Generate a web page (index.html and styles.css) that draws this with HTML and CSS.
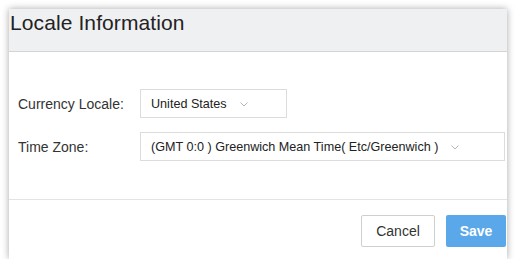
FILE: index.html
```html
<!DOCTYPE html>
<html>
<head>
    <title>Locale Information</title>
    <link rel="stylesheet" href="styles.css">
</head>
<body>
    <div class="panel">
        <div class="panel-header">
            <h1>Locale Information</h1>
        </div>
        <div class="panel-body">
            <div class="form-row">
                <label>Currency Locale:</label>
                <div class="select select-short">
                    <span>United States</span>
                    <svg class="chevron" width="8" height="5" viewBox="0 0 8 5"><polyline points="0.5,0.5 4,4 7.5,0.5" fill="none" stroke="#b5b5b5" stroke-width="1"/></svg>
                </div>
            </div>
            <div class="form-row">
                <label>Time Zone:</label>
                <div class="select select-long">
                    <span>(GMT 0:0 ) Greenwich Mean Time( Etc/Greenwich )</span>
                    <svg class="chevron" width="8" height="5" viewBox="0 0 8 5"><polyline points="0.5,0.5 4,4 7.5,0.5" fill="none" stroke="#b5b5b5" stroke-width="1"/></svg>
                </div>
            </div>
        </div>
        <div class="panel-footer">
            <button class="btn btn-cancel">Cancel</button>
            <button class="btn btn-save">Save</button>
        </div>
    </div>
</body>
</html>
```

FILE: styles.css
```css
body { margin: 0; padding: 9px 10px 0 9px; font-family: "Liberation Sans", Arial, sans-serif; color: #333; background: #fff; overflow: hidden; }
.panel {
    width: 498px;
    height: 250px;
    background: #fff;
    box-shadow: 0 0 7px rgba(0,0,0,0.35);
    overflow: hidden;
}
.panel-header {
    height: 43px;
    background: #eff0f2;
    border-bottom: 1px solid #d4d4d4;
    box-sizing: border-box;
    padding-left: 1px;
}
h1 { margin: 0; font-size: 21px; font-weight: 400; line-height: 28px; color: #222; letter-spacing: 0.1px; }
.panel-body {
    padding: 37px 2px 38px 9px;
    border-bottom: 1px solid #e3e3e3;
    display: flex;
    flex-direction: column;
    gap: 14px;
}
.form-row { display: flex; align-items: center; }
label { width: 122px; flex-shrink: 0; font-size: 14px; color: #333; }
.select {
    height: 29px;
    box-sizing: border-box;
    border: 1px solid #dcdcdc;
    display: flex;
    align-items: center;
    padding-left: 10px;
    font-size: 12.6px;
    color: #222;
}
.select-short { width: 147px; }
.select-long { width: 365px; }
.chevron { margin-left: 13px; margin-top: 2px; }
.panel-footer {
    display: flex;
    justify-content: flex-end;
    gap: 11px;
    padding: 15px 1px 0 0;
}
.btn {
    height: 32px;
    font-family: "Liberation Sans", Arial, sans-serif;
    font-size: 14px;
    border-radius: 2px;
    cursor: pointer;
}
.btn-cancel { width: 74px; background: #fff; border: 1px solid #cfcfcf; color: #333; }
.btn-save { width: 60px; background: #5aa8ea; border: none; color: #fff; font-weight: 700; }
```
